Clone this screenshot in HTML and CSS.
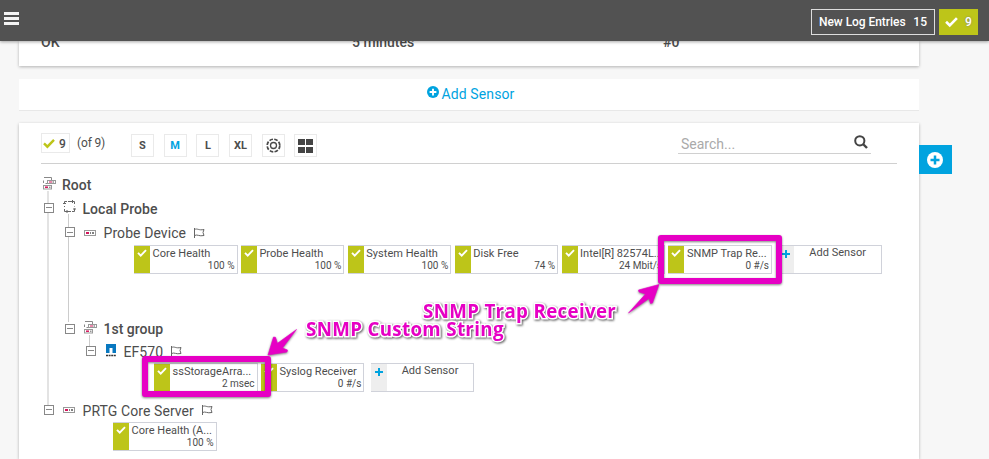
FILE: index.html
```html
<!DOCTYPE html>
<html lang="en">
<head>
<meta charset="utf-8">
<title>PRTG Device Tree</title>
<link rel="stylesheet" href="styles.css">
</head>
<body>
<svg class="defs" width="0" height="0" aria-hidden="true">
  <symbol id="check" viewBox="0 0 12 10"><path d="M1 4.8 4.4 8.2 11 1.4" fill="none" stroke="currentColor" stroke-width="2.4"/></symbol>
  <symbol id="flag" viewBox="0 0 12 12"><path d="M1.500 1v10M1.500 2.500c3-1.500 4 1.200 9.500 0l-1 3 1 3c-5 1.200-6.500-1.500-9.500 0" fill="none" stroke="currentColor"/></symbol>
  <symbol id="device" viewBox="0 0 12 6"><rect x=".5" y=".5" width="11" height="5" fill="#fff" stroke="#999"/><path d="M2 3h3" stroke="#d4145a" stroke-width="2"/><path d="M6 3h1m1 0h2" stroke="#555" stroke-width="1.500"/></symbol>
  <symbol id="group" viewBox="0 0 13 13"><path d="M.5 6V3.500M1 .500h7.500V3M2.500 6.500h2" fill="none" stroke="#888"/><rect x="4.500" y="3.500" width="8" height="3" fill="#fff" stroke="#999"/><path d="M6 5h3" stroke="#d4145a"/><path d="M9.500 5H11" stroke="#555"/><rect x=".5" y="8.500" width="8" height="3.500" fill="#fff" stroke="#999"/><path d="M2 10.200h3" stroke="#d4145a" stroke-width="1.500"/><path d="M6 10.200h1.500" stroke="#666"/></symbol>
  <symbol id="plus-circle" viewBox="0 0 16 16"><circle cx="8" cy="8" r="8" fill="currentColor"/><path d="M8 3.500v9M3.500 8h9" stroke="var(--plus)" stroke-width="2.500"/></symbol>
</svg>

<header class="topbar">
  <button class="menu" aria-label="Menu"><i></i><i></i><i></i></button>
  <div class="log">New Log Entries<b>15</b></div>
  <div class="up"><svg width="13" height="12"><use href="#check"/></svg><span>9</span></div>
</header>

<div class="page">
  <main class="column">
    <section class="card summary"><span>OK</span><span>5 minutes</span><span>#0</span></section>
    <section class="addbar"><svg width="12" height="12"><use href="#plus-circle"/></svg><span>Add Sensor</span></section>
    <section class="card devices">
      <div class="toolbar">
        <div class="count"><svg width="12" height="11"><use href="#check"/></svg><span>9</span></div>
        <span class="of">(of 9)</span>
        <div class="sizes">
          <button>S</button><button class="active">M</button><button>L</button><button>XL</button>
          <button aria-label="Circle view"><svg width="15" height="15" viewBox="0 0 15 15" fill="none" stroke="#4a4a4a"><circle cx="7.500" cy="7.500" r="6.300" stroke-width="1.700" stroke-dasharray="3.600 1.350"/><circle cx="7.500" cy="7.500" r="3" stroke-width="1.300"/></svg></button>
          <button aria-label="Tile view"><svg width="15" height="14" viewBox="0 0 15 14" fill="#444"><path d="M0 0h7v6H0zM8 0h7v6H8zM0 8h7v6H0zM8 8h7v6H8z"/></svg></button>
        </div>
        <div class="search"><span>Search...</span><svg width="14" height="14" viewBox="0 0 14 14" fill="none" stroke="#444"><circle cx="5.800" cy="5.800" r="4.600" stroke-width="2"/><path d="m9 9 4 4" stroke-width="2.400"/></svg></div>
      </div>

      <div class="tree">
        <div class="node root"><svg width="13" height="13"><use href="#group"/></svg><b>Root</b></div>
        <div class="branch trunk">
          <div class="node local"><i class="toggle"></i><svg width="13" height="13" viewBox="0 0 13 13" fill="none" stroke="#666"><path d="M1.500 4V1.500H4M5 1.500h6.500V4M11.500 6v.5M11.500 8.500v3H9M8 11.500H1.500V9M1.500 7V6"/><path d="M0 3.500h3M10 9h3M9.500 0v3M4 10v3"/></svg><b>Local Probe</b></div>
          <div class="branch probe">
            <div class="node dev"><i class="toggle"></i><svg class="d" width="12" height="6"><use href="#device"/></svg><span class="name">Probe Device</span><svg class="flag" width="12" height="12"><use href="#flag"/></svg></div>
            <div class="sensors first">
              <div class="sensor"><i><svg width="10" height="8"><use href="#check"/></svg></i><p>Core Health</p><em>100 %</em></div>
              <div class="sensor"><i><svg width="10" height="8"><use href="#check"/></svg></i><p>Probe Health</p><em>100 %</em></div>
              <div class="sensor"><i><svg width="10" height="8"><use href="#check"/></svg></i><p>System Health</p><em>100 %</em></div>
              <div class="sensor"><i><svg width="10" height="8"><use href="#check"/></svg></i><p>Disk Free</p><em>74 %</em></div>
              <div class="sensor"><i><svg width="10" height="8"><use href="#check"/></svg></i><p>Intel[R] 82574L...</p><em>24 Mbit/s</em></div>
              <div class="sensor"><i><svg width="10" height="8"><use href="#check"/></svg></i><p>SNMP Trap Re...</p><em>0 #/s</em></div>
              <div class="sensor add"><i></i><p>Add Sensor</p></div>
            </div>
            <div class="node grp"><i class="toggle"></i><svg width="13" height="13"><use href="#group"/></svg><b>1st group</b></div>
            <div class="branch inner">
              <div class="node ef"><i class="toggle"></i><svg width="10" height="13" viewBox="0 0 10 13"><path fill="#0878c0" d="M0 0h10v9H6.500V4h-3v5H0z"/><path d="M0 11.500h10" stroke="#333" stroke-width="1.500" stroke-dasharray="2 .6"/></svg><span class="name">EF570</span><svg class="flag" width="12" height="12"><use href="#flag"/></svg></div>
              <div class="sensors">
                <div class="sensor"><i><svg width="10" height="8"><use href="#check"/></svg></i><p>ssStorageArra...</p><em>2 msec</em></div>
                <div class="sensor"><i><svg width="10" height="8"><use href="#check"/></svg></i><p>Syslog Receiver</p><em>0 #/s</em></div>
                <div class="sensor add"><i></i><p>Add Sensor</p></div>
              </div>
            </div>
          </div>
          <div class="node core"><i class="toggle"></i><svg class="d" width="12" height="6"><use href="#device"/></svg><span class="name">PRTG Core Server</span><svg class="flag" width="12" height="12"><use href="#flag"/></svg></div>
          <div class="sensors last">
            <div class="sensor"><i><svg width="10" height="8"><use href="#check"/></svg></i><p>Core Health (A...</p><em>100 %</em></div>
          </div>
        </div>
      </div>
    </section>
  </main>
  <button class="side" aria-label="Add"><svg width="16" height="16"><use href="#plus-circle"/></svg></button>
</div>

<svg class="marks" width="989" height="459" viewBox="0 0 989 459">
  <g fill="none" stroke="#e600c4" stroke-width="6" stroke-linejoin="round">
    <rect x="661" y="238" width="118" height="43"/>
    <rect x="145" y="359" width="123" height="35"/>
  </g>
  <g fill="#e600c4" stroke="#e600c4" stroke-width=".6" stroke-linejoin="round">
    <path d="M659 284.500 638.500 290l.5 2 6.500 2L628.500 313 649 298.500l1.500 5 2-.5z"/>
    <path d="m268 355 5.500-18 2 .3 2 6L296.500 329.500 282.500 348l5 2-.5 2z"/>
  </g>
</svg>
<div class="callout trap">SNMP Trap Receiver</div>
<div class="callout custom">SNMP Custom String</div>
</body>
</html>
```
FILE: styles.css
```css
* { box-sizing: border-box; }
body { margin: 0; width: 989px; height: 459px; overflow: hidden; position: relative; background: #f7f7f7; color: #4d4d4d; font: 14px Roboto, sans-serif; }
button { border: 0; padding: 0; background: none; font: inherit; color: inherit; }
svg { display: block; flex: none; }
.defs { position: absolute; }
i, em { font-style: normal; }
b { font-weight: 500; }

.topbar { position: relative; z-index: 2; height: 41px; display: flex; align-items: flex-start; padding: 9px 11px 0 4px; background: #525252; color: #fff; box-shadow: 0 1px 3px rgba(0,0,0,.35); }
.menu { display: grid; gap: 2px; margin: 3px auto 0 0; width: 15px; }
.menu i { height: 3px; background: #f4f4f4; }
.log { display: flex; align-items: center; justify-content: space-between; width: 124px; height: 26px; padding: 0 7px; border: 1px solid #ddd; font-size: 12px; font-weight: 500; letter-spacing: -.05px; }
.log b { letter-spacing: 0; }
.up { display: flex; align-items: center; width: 39px; height: 26px; margin-left: 4px; padding: 0 6px; gap: 7px; background: #bdc519; font-size: 12px; font-weight: 500; text-shadow: 0 0 2px #777; }

.page { display: flex; align-items: flex-start; padding-left: 19px; }
.column { width: 900px; }
.card { background: #fff; box-shadow: 0 1px 3px rgba(0,0,0,.28); }
.summary { display: grid; grid-template-columns: 311px 311px auto; height: 25px; padding-left: 22px; font-size: 14px; line-height: 16px; font-weight: 500; }
.summary span { margin-top: -7px; }
.addbar { --plus: #fff; display: flex; justify-content: center; gap: 3px; height: 32px; margin: 13px 0 12px; padding: 7px 0 0 3px; background: #fff; border-bottom: 1px solid #e8e8e8; color: #00a3df; line-height: 17px; letter-spacing: .1px; }

.devices { height: 336px; padding: 10px 22px 0; }
.toolbar { display: flex; align-items: flex-start; height: 31px; border-bottom: 1px solid #d0d0d0; }
.count { display: flex; align-items: center; gap: 4px; width: 29px; height: 20px; padding-left: 1px; border: 1px solid #eaeaea; font-size: 12px; font-weight: 500; }
.count span { margin-top: 2px; }
.count svg { color: #bdc519; }
.of { margin: 3px 0 0 7px; width: 54px; font-size: 12px; line-height: 14px; letter-spacing: -.15px; }
.sizes { display: flex; gap: 9.700px; margin-top: 1px; }
.sizes button { display: grid; place-items: center; width: 23px; height: 23px; border: 1px solid #eaeaea; font-size: 11px; font-weight: 700; }
.sizes .active { color: #00a3df; }
.search { display: flex; justify-content: space-between; width: 193px; height: 21px; margin: 0 26px 0 auto; padding: 2px 3px 0; border-bottom: 1px solid #d0d0d0; color: #aaa; }
.search span { margin-top: 1px; line-height: 17px; }

.tree { padding-top: 10px; }
.branch { position: relative; }
.branch::before { content: ""; position: absolute; width: 1px; background: #ccc; }
.trunk::before { width: 2px; left: 6px; top: -5px; height: 214px; background: #e3e3e3; }
.probe::before { left: 27px; top: -6px; height: 108px; }
.inner::before { left: 48px; top: -5px; height: 12px; }
.node { position: relative; display: flex; align-items: center; height: 22px; white-space: nowrap; }
.root { padding-left: 2px; }
.root svg { margin: -3px 6px 0 0; }
.local { height: 24px; padding-left: 3px; }
.local > svg { margin: -4px 6.500px 0 9px; }
.local b { margin-top: 1px; letter-spacing: .05px; }
.dev { height: 25px; padding-left: 24px; }
.grp { padding-left: 24px; }
.grp > svg { margin: -3px 6.500px 0 9px; }
.ef { padding-left: 44.500px; }
.ef > svg:first-of-type { margin: -1px 7.500px 0 10.500px; }
.core { margin-top: 7px; padding-left: 3px; }
.d { margin: 0 7.500px 0 9px; }
.name { margin-top: 1px; letter-spacing: .08px; }
.flag { margin-left: 7px; color: #666; }
.toggle { width: 10px; height: 10px; margin-top: -1px; border: 1px solid #888; background: linear-gradient(#888, #888) center / 6px 1px no-repeat #fff; }

.sensors { display: flex; gap: 3.400px; padding: 1px 0 0 113px; }
.first { padding: 0 0 0 93px; margin-bottom: 44px; }
.last { padding-left: 72px; }
.sensor { display: grid; grid-template: 15px 12px / 15px 1fr; flex: none; width: 103.500px; height: 29px; border: 1px solid #d0d2da; background: #fff; font-size: 11px; }
.sensor > i { grid-row: 1 / 3; display: grid; justify-items: center; margin: 0 0 0 -1px; padding-top: 3px; background: #bdc519; color: #fff; }
.sensor p { margin: 0; padding-left: 2.500px; line-height: 15px; white-space: nowrap; letter-spacing: .03px; }
.sensor em { padding-right: 2px; text-align: right; font-size: 10px; line-height: 9px; }
.sensor.add { margin-left: 3px; }
.sensor.add > i { background: linear-gradient(#00a3df, #00a3df) 4px 7px / 8px 2px no-repeat, linear-gradient(#00a3df, #00a3df) 7px 4px / 2px 8px no-repeat, #eee; }
.sensor.add p { padding: 0; text-align: center; line-height: 13px; }

.side { --plus: #00a3df; display: grid; place-items: center; width: 33px; height: 29px; margin-top: 104px; background: #00a3df; color: #fff; }
.side svg { margin-left: -2px; }
.marks { position: absolute; z-index: 3; left: 0; top: 0; filter: drop-shadow(0 1px 1px rgba(0,0,0,.5)); }
.callout { position: absolute; z-index: 4; white-space: nowrap; color: #e600c4; font: 700 18.700px/24px "Open Sans", sans-serif; letter-spacing: .35px; paint-order: stroke; -webkit-text-stroke: 3px #fff; filter: drop-shadow(1px 1px 1px rgba(0,0,0,.65)); }
.trap { left: 423px; top: 299px; }
.custom { left: 306px; top: 317px; }
```
